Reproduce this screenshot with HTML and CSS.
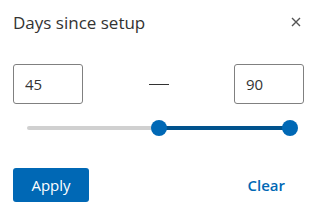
FILE: index.html
```html
<!DOCTYPE html>
<html lang="en">
<head>
    <meta charset="UTF-8">
    <meta name="viewport" content="width=device-width, initial-scale=1.0">
    <title>Days since setup</title>
    <link rel="stylesheet" href="styles.css">
</head>
<body>

<div class="filter-panel">
    <div class="filter-header">
        <h2 class="filter-title">Days since setup</h2>
        <button class="close-btn" aria-label="Close">
            <svg width="10" height="10" viewBox="0 0 10 10">
                <path d="M1 1 L9 9 M9 1 L1 9" stroke="#545454" stroke-width="1.4" fill="none"/>
            </svg>
        </button>
    </div>

    <div class="range-inputs">
        <input type="text" class="range-field" value="45">
        <span class="range-dash"></span>
        <input type="text" class="range-field" value="90">
    </div>

    <div class="slider">
        <div class="slider-track"></div>
        <div class="slider-fill" style="left: 50%; right: 0%;"></div>
        <div class="slider-thumb" style="left: 50%;"></div>
        <div class="slider-thumb" style="left: 100%;"></div>
    </div>

    <div class="filter-actions">
        <button class="apply-btn">Apply</button>
        <button class="clear-btn">Clear</button>
    </div>
</div>

</body>
</html>
```

FILE: styles.css
```css
body {
    font-family: 'Open Sans', sans-serif;
    background-color: white;
    margin: 0;
    color: #2b2b2b;
}
.filter-panel {
    padding: 10px 12px 10px 13px;
}
.filter-header {
    display: flex;
    align-items: center;
    justify-content: space-between;
    height: 24px;
}
.filter-title {
    font-size: 17px;
    font-weight: normal;
    margin: 0;
    color: #333;
}
.close-btn {
    background: none;
    border: none;
    padding: 0;
    margin-right: 3px;
    width: 10px;
    height: 10px;
    display: flex;
    cursor: pointer;
}
.range-inputs {
    display: flex;
    align-items: center;
    justify-content: space-between;
    margin-top: 30px;
}
.range-field {
    box-sizing: border-box;
    width: 70px;
    height: 40px;
    border: 1px solid #808080;
    border-radius: 3px;
    padding: 0 11px;
    font-family: 'Open Sans', sans-serif;
    font-size: 15px;
    color: #333;
}
.range-dash {
    width: 20px;
    height: 1px;
    background-color: #333;
}
.slider {
    position: relative;
    height: 16px;
    margin: 16px 14px 0 14px;
}
.slider-track {
    position: absolute;
    left: 0;
    right: 0;
    top: 6px;
    height: 4px;
    border-radius: 2px;
    background-color: #d0d0d0;
}
.slider-fill {
    position: absolute;
    top: 6px;
    height: 4px;
    background-color: #00528d;
}
.slider-thumb {
    position: absolute;
    top: 0;
    width: 16px;
    height: 16px;
    margin-left: -8px;
    border-radius: 50%;
    background-color: #0068b5;
}
.filter-actions {
    display: flex;
    align-items: center;
    justify-content: space-between;
    margin-top: 32px;
}
.apply-btn {
    background-color: #0068b5;
    color: white;
    font-family: 'Open Sans', sans-serif;
    font-size: 15px;
    font-weight: normal;
    width: 76px;
    height: 34px;
    border: none;
    border-radius: 3px;
    cursor: pointer;
}
.clear-btn {
    background: none;
    border: none;
    color: #0068b5;
    font-family: 'Open Sans', sans-serif;
    font-size: 15px;
    font-weight: 600;
    padding: 0;
    margin-right: 19px;
    cursor: pointer;
}
```
